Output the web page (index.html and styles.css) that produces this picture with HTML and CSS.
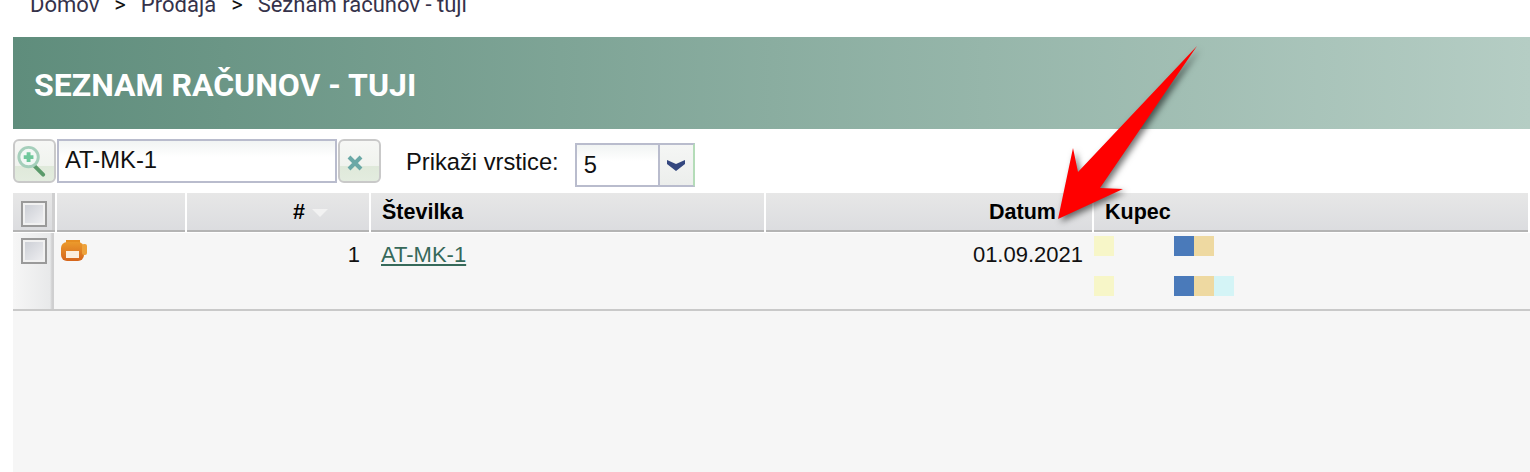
FILE: index.html
```html
<!DOCTYPE html>
<html lang="sl">
<head>
  <meta charset="UTF-8" />
  <title>Seznam računov - tuji</title>
  <link rel="stylesheet" href="styles.css">
</head>
<body>
  <div class="breadcrumb">
    <span>Domov</span><b>&gt;</b><span>Prodaja</span><b>&gt;</b><span>Seznam računov - tuji</span>
  </div>

  <div class="content">
    <h1 class="title">SEZNAM RAČUNOV - TUJI</h1>

    <div class="toolbar">
      <div class="search">
        <button class="btn btn-zoom">
          <svg width="34" height="36" viewBox="0 0 34 36">
            <path d="M20 23l9 9" stroke="#5a9a6a" stroke-width="4" stroke-linecap="round"/>
            <circle cx="14" cy="14" r="10" fill="#f2f8f5" stroke="#a5cfbb" stroke-width="3"/>
            <path d="M14 9v10M9 14h10" stroke="#6fc89c" stroke-width="4"/>
          </svg>
        </button>
        <input class="search-input" type="text" value="AT-MK-1">
        <button class="btn btn-clear">
          <svg width="18" height="18" viewBox="0 0 18 18">
            <path d="M3 3l12 12M15 3L3 15" stroke="#6aa8a6" stroke-width="4"/>
          </svg>
        </button>
      </div>
      <label class="rows-label">Prikaži vrstice:</label>
      <div class="select">
        <span class="select-value">5</span>
        <span class="select-arrow">
          <svg width="18" height="12" viewBox="0 0 18 12"><path d="M0 1l9 4 9-4v4l-9 7-9-7z" fill="#34477f"/></svg>
        </span>
      </div>
    </div>

    <div class="grid">
      <div class="head head-check"><span class="check"></span></div>
      <div class="head"></div>
      <div class="head right head-num">#<i class="sort"></i></div>
      <div class="head">Številka</div>
      <div class="head right head-date">Datum</div>
      <div class="head">Kupec</div>

      <div class="cell cell-check"><span class="check"></span></div>
      <div class="cell cell-icon">
        <svg width="26" height="22" viewBox="0 0 26 22">
          <defs>
            <linearGradient id="printerBody" x1="0" y1="0" x2="0" y2="1">
              <stop offset="0" stop-color="#eb9a2c"/>
              <stop offset="1" stop-color="#d5651b"/>
            </linearGradient>
          </defs>
          <path d="M5 0h14v5h-14z" fill="#e68e22"/>
          <rect x="0" y="2" width="23" height="19" rx="6" fill="url(#printerBody)"/>
          <rect x="21" y="4" width="5" height="11" rx="2" fill="#eda23c"/>
          <rect x="5" y="11" width="13" height="7" fill="#fbeedd"/>
        </svg>
      </div>
      <div class="cell right cell-num">1</div>
      <div class="cell cell-link"><a class="link" href="#">AT-MK-1</a></div>
      <div class="cell right cell-date">01.09.2021</div>
      <div class="cell cell-buyer">
        <div class="buyer-line">
          <i class="swatch yellow"></i>
          <span class="swatches"><i class="swatch blue"></i><i class="swatch sand"></i></span>
        </div>
        <div class="buyer-line">
          <i class="swatch yellow"></i>
          <span class="swatches"><i class="swatch blue"></i><i class="swatch sand"></i><i class="swatch aqua"></i></span>
        </div>
      </div>
    </div>
    <div class="empty"></div>
  </div>

  <svg class="arrow" width="160" height="190" viewBox="1050 40 160 190">
    <path d="M1197 46L1100 188L1123 189L1058 219L1073 148L1078 172Z" fill="#ff0000"/>
  </svg>
</body>
</html>
```

FILE: styles.css
```css
html, body {
  margin: 0;
  padding: 0;
  height: 472px;
  overflow: hidden;
  background: #fff;
}

body {
  font-family: "Liberation Sans", Arial, sans-serif;
  font-size: 22px;
  color: #111;
}

.breadcrumb {
  height: 37px;
  margin-top: -7px;
  padding-left: 30px;
  display: flex;
  gap: 15px;
  font-family: Roboto, sans-serif;
  font-size: 22px;
  line-height: 24px;
  color: #35324a;
}

.breadcrumb b {
  font-weight: 400;
  color: #111;
}

.content {
  margin-top: 7px;
  margin-left: 13px;
}

.title {
  margin: 0;
  height: 92px;
  padding-left: 21px;
  line-height: 96px;
  font-family: Roboto, sans-serif;
  font-size: 32px;
  font-weight: 700;
  color: #fff;
  background: linear-gradient(90deg, #5f8d7c 0%, #b5cdc4 100%);
}

.toolbar {
  display: flex;
  height: 64px;
  align-items: flex-start;
}

.search {
  display: flex;
  gap: 1px;
  margin-top: 10px;
}

.btn {
  width: 43px;
  height: 44px;
  padding: 0;
  display: flex;
  align-items: center;
  justify-content: center;
  border: 2px solid #c9c9c9;
  border-radius: 6px;
  background: linear-gradient(#f6f7f5 0%, #f0f3ee 62%, #dfe9da 63%, #e3ecdf 100%);
}

.btn svg {
  filter: blur(0.5px);
}

.btn-zoom {
  padding-right: 6px;
}

.btn-clear {
  padding: 4px 10px 0 0;
}

.search-input {
  width: 280px;
  height: 44px;
  box-sizing: border-box;
  padding: 0 6px 2px;
  border: 2px solid #b9bccd;
  background: linear-gradient(#f1f4f3, #fff 40%);
  font-family: inherit;
  font-size: 23.8px;
  color: #111;
  outline: none;
}

.rows-label {
  margin-left: 25px;
  margin-top: 19px;
  line-height: 28px;
  font-size: 23.7px;
}

.select {
  display: flex;
  width: 120px;
  height: 44px;
  box-sizing: border-box;
  margin-top: 14px;
  margin-left: 16px;
  border: 2px solid #b9bccd;
  border-right-color: #b4dcb8;
  background: #fff;
}

.select-value {
  flex: 1;
  padding-left: 7px;
  line-height: 40px;
  font-size: 23.7px;
  background: linear-gradient(#f1f4f3, #fff 40%);
}

.select-arrow {
  width: 33px;
  display: flex;
  align-items: center;
  justify-content: center;
  border-left: 2px solid #b9bccd;
  background: linear-gradient(#f5f6f5, #eceeec);
}

.select-arrow svg {
  filter: blur(0.4px);
}

.grid {
  display: grid;
  grid-template-columns: 44px 130px 184px 395px 328px 1fr;
  grid-template-rows: 39px 78px;
  row-gap: 1px;
  background: #fff;
}

.head {
  box-sizing: border-box;
  padding: 0 11px;
  background: linear-gradient(#e7e7e7, #dbdcdf);
  background-clip: padding-box;
  border-right: 2px solid #fff;
  box-shadow: inset 0 -2px 0 #b4b4b4;
  font-size: 21.5px;
  font-weight: 700;
  line-height: 38px;
  color: #000;
}

.head-check {
  padding: 8px 0 0 8px;
  background: linear-gradient(90deg, transparent 39px, #cfcfd0 39px), linear-gradient(#e7e7e7, #dbdcdf);
}

.head-num {
  padding-right: 41px;
}

.head-date {
  padding-right: 36px;
}

.right {
  text-align: right;
}

.sort {
  display: inline-block;
  margin-left: 7px;
  width: 0;
  height: 0;
  vertical-align: 2px;
  border-left: 8px solid transparent;
  border-right: 8px solid transparent;
  border-top: 8px solid #f2f2f2;
}

.cell {
  box-sizing: border-box;
  padding: 7px 0 0;
  background: #f6f6f6;
  border-bottom: 2px solid #c9c9c9;
  line-height: 30px;
}

.cell-check {
  padding: 5px 0 0 8px;
  background: linear-gradient(90deg, #f6f6f6, #e8e9ea 37px, #cfcfd0 39px, #cfcfd0 41px, #f6f6f6 41px);
}

.cell-icon {
  padding: 7px 0 0 4px;
}

.cell-icon svg {
  display: block;
  filter: blur(0.5px);
}

.cell-num {
  padding-right: 11px;
}

.cell-link {
  padding-left: 10px;
}

.cell-date {
  padding-right: 11px;
}

.cell-buyer {
  padding: 3px 0 0;
}

.check {
  display: block;
  width: 26px;
  height: 26px;
  box-sizing: border-box;
  border: 2px solid #9a9a9a;
  box-shadow: inset 0 0 0 2px #f1f1f1;
  background: linear-gradient(135deg, #c9ccd3, #f1f1f3);
}

.link {
  color: #36695a;
  text-decoration: underline;
}

.buyer-line {
  display: flex;
  gap: 60px;
  height: 20px;
  margin-bottom: 20px;
}

.swatches {
  display: flex;
}

.swatch {
  display: block;
  width: 20px;
  height: 20px;
}

.yellow { background: #f7f6c8; }
.blue { background: #4a7aba; }
.sand { background: #eed9a1; }
.aqua { background: #d4f4f6; }

.empty {
  height: 170px;
  background: #f6f6f6;
}

.arrow {
  position: absolute;
  left: 1050px;
  top: 40px;
  overflow: visible;
  filter: drop-shadow(3px 3px 3px rgba(0, 0, 0, 0.55));
}
```
